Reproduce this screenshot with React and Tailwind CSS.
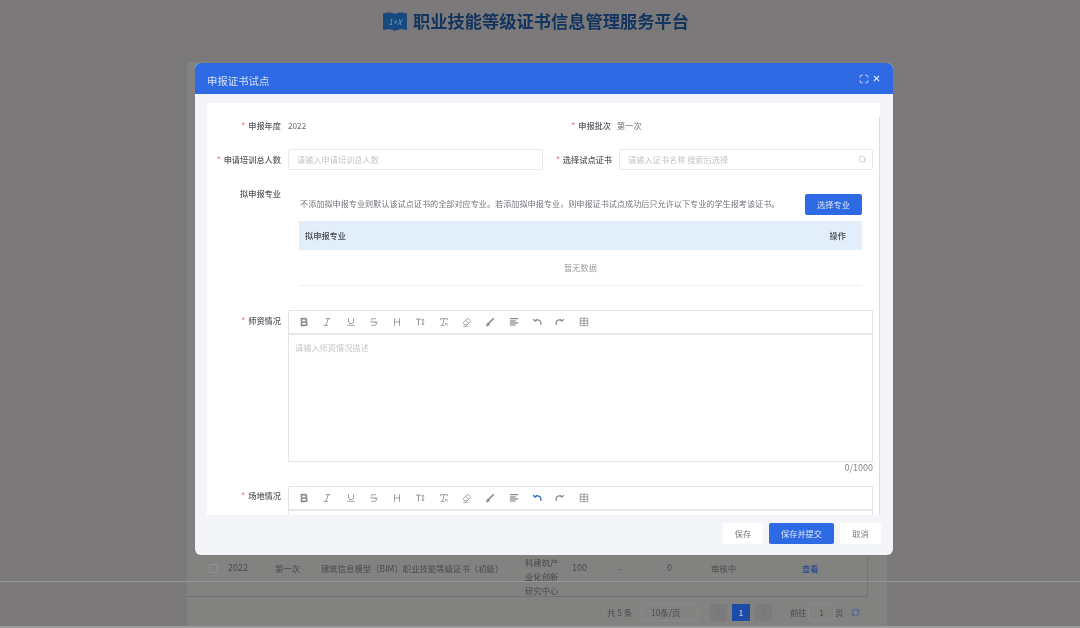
import React from 'react';
import {
  Underline, Strikethrough, Heading, RemoveFormatting, Italic, Table, Maximize, X, Search,
  ChevronLeft, ChevronRight, ChevronDown, RefreshCw,
} from 'lucide-react';

const BoldMark = (props) => (
  <svg viewBox="0 0 24 24" fill="none" stroke="currentColor" strokeWidth="4" {...props}>
    <path d="M6 4h8a4 4 0 0 1 0 8H6zM6 12h9a4 4 0 0 1 0 8H6z" />
  </svg>
);

const UndoArc = (props) => (
  <svg viewBox="0 0 24 24" fill="none" stroke="currentColor" strokeWidth="3" {...props}>
    <path d="M3 5l4 5 5-4" />
    <path d="M7 9c3-3 12-3 14 3 .5 2 .3 4 0 7" />
  </svg>
);

const RedoArc = (props) => (
  <svg viewBox="0 0 24 24" fill="none" stroke="currentColor" strokeWidth="3" {...props}>
    <path d="M21 5l-4 5-5-4" />
    <path d="M17 9C14 6 5 6 3 12c-.5 2-.3 4 0 7" />
  </svg>
);

const FontSize = (props) => (
  <svg viewBox="0 0 24 24" fill="none" stroke="currentColor" strokeWidth="2.2" {...props}>
    <path d="M2 5h13M8.5 5v15M19 5v14M16.5 8 19 5l2.5 3M16.5 16l2.5 3 2.5-3" />
  </svg>
);

const Pen = (props) => (
  <svg viewBox="0 0 24 24" fill="none" stroke="currentColor" strokeWidth="2" {...props}>
    <path d="M14 3l7 7-9 9H7l-3-3v-4zM9 8l7 7" />
    <path d="M3 22h12" />
  </svg>
);

const Brush = (props) => (
  <svg viewBox="0 0 24 24" fill="none" stroke="currentColor" strokeWidth="4" {...props}>
    <path d="M21 3 9 15" />
    <path d="M9 14c-3 0-5 2-5 4 0 1-1 2-2 3 4 1 9 0 9-5z" fill="currentColor" strokeWidth="1" />
  </svg>
);

const AlignBars = (props) => (
  <svg viewBox="0 0 24 24" fill="none" stroke="currentColor" strokeWidth="3" {...props}>
    <path d="M2 4h20M2 9h14M2 14h20M2 19h14" />
  </svg>
);

const tools = [BoldMark, Italic, Underline, Strikethrough, Heading, FontSize, RemoveFormatting, Pen, Brush, AlignBars, UndoArc, RedoArc, Table];

const Toolbar = ({ activeUndo }) => (
  <div className="flex h-[24px] items-center gap-[13.3px] border-b-2 border-[#e6e7ea] pl-[10px]">
    {tools.map((Icon, i) => (
      <Icon
        key={i}
        className={`h-[10px] w-[10px] ${activeUndo && Icon === UndoArc ? 'text-[#2f68c4]' : 'text-[#8a8c90]'}`}
      />
    ))}
  </div>
);

const Label = ({ children, required = true, className = '' }) => (
  <div className={`shrink-0 text-right text-[8.2px] font-medium text-[#55585f] ${className}`}>
    {required && <span className="mr-[3px] text-[#ee7b7b]">*</span>}
    {children}
  </div>
);

const Input = ({ placeholder, icon }) => (
  <div className="flex h-[21px] flex-1 items-center justify-between rounded-[2px] border border-[#e8e9ed] pr-[5px] pl-[8px] text-[8.2px] text-[#c2c4c9]">
    {placeholder}
    {icon}
  </div>
);

const App = () => {
  return (
    <div className="relative flex h-[628px] w-[1080px] flex-col overflow-hidden bg-[#7b7979] font-['Noto_Sans_CJK_SC','Noto_Sans',sans-serif] blur-[0.35px]">
      {/* page behind the dialog */}
      <header className="flex h-[42px] shrink-0 items-center gap-[6px] pl-[383px]">
        <svg viewBox="0 0 24 19" className="h-[19px] w-[24px]">
          <path d="M0 1.5c4-1.5 9-1.5 12 .5 3-2 8-2 12-.5V18c-4-1.2-9-1-12 1-3-2-8-2.2-12-1z" fill="#17497f" />
          <text x="12" y="12.5" fontSize="8" fontStyle="italic" fill="#6f9fd0" textAnchor="middle">1+X</text>
        </svg>
        <h1 className="text-[17.25px] font-bold leading-none text-[#12345f]">职业技能等级证书信息管理服务平台</h1>
      </header>

      <main className="mt-[20px] ml-[187px] flex w-[700px] flex-1 flex-col justify-end bg-[#828281] pb-[2px] text-[8.4px] text-[#4a4a4a]">
        <div className="flex h-[42px] w-[681px] items-center border-r border-b border-[#737373] pb-[15px] pl-[22px]">
          <span className="h-[9px] w-[9px] rounded-[1px] border border-[#8f8f8f]" />
          <span className="ml-[10px] w-[47px] text-[9px]">2022</span>
          <span className="w-[46px]">第一次</span>
          <span className="w-[204px]">建筑信息模型（BIM）职业技能等级证书（初级）</span>
          <span className="w-[47px] self-start pr-[12px] leading-[14px]">科建筑产业化创新研究中心</span>
          <span className="w-[47px] text-[9px]">100</span>
          <span className="w-[48px]">-</span>
          <span className="w-[44px] text-[9px]">0</span>
          <span className="w-[91px]">审核中</span>
          <span className="font-medium text-[#27478f]">查看</span>
        </div>
        <div className="flex h-[29px] items-center pt-[2px] pl-[420px]">
          <span className="w-[34px]">共 5 条</span>
          <span className="flex h-[17px] w-[57px] items-center justify-between rounded-[2px] border border-[#8a8a8a] px-[9px]">
            10条/页
            <ChevronDown className="h-[7px] w-[7px] text-[#737373]" />
          </span>
          <span className="ml-[12px] flex h-[17px] w-[17px] items-center justify-center bg-[#7c7c7c]">
            <ChevronLeft className="h-[9px] w-[9px] text-[#6b6b6b]" />
          </span>
          <span className="ml-[5px] flex h-[17px] w-[18px] items-center justify-center bg-[#1c4ca6] font-medium text-[#b9c6de]">1</span>
          <span className="ml-[5px] flex h-[17px] w-[17px] items-center justify-center bg-[#7c7c7c]">
            <ChevronRight className="h-[9px] w-[9px] text-[#6b6b6b]" />
          </span>
          <span className="ml-[18px] w-[18px]">前往</span>
          <span className="flex h-[17px] w-[27px] items-center justify-center rounded-[2px] border border-[#8a8a8a]">1</span>
          <span>页</span>
          <RefreshCw className="ml-[8px] h-[9px] w-[9px] text-[#3f5c9c]" />
        </div>
      </main>

      {/* stray rule across the page */}
      <div className="absolute top-[581px] left-0 h-px w-full bg-[#949494]" />
      <div className="absolute bottom-0 left-0 h-[2px] w-full bg-[#9a9a9a]" />

      {/* dialog */}
      <div className="absolute top-[63px] left-[195px] flex h-[492px] w-[698px] flex-col overflow-hidden rounded-[6px] bg-[#f4f5f9]">
        <div className="flex h-[31px] shrink-0 items-center justify-between bg-[#2d6ae3] px-[12px] text-[10.4px] text-[#d5e1f8]">
          <span className="pt-[4px]">申报证书试点</span>
          <div className="flex items-center gap-[3px] text-[#dbe6fa]">
            <Maximize className="h-[10px] w-[10px]" />
            <X className="h-[9px] w-[9px]" strokeWidth={3} />
          </div>
        </div>

        <div className="relative mt-[9px] mr-[13px] ml-[12px] h-[412px] shrink-0 overflow-hidden bg-white pt-[12px] text-[8.2px]">
          <div className="absolute top-[14px] right-0 bottom-0 w-px bg-[#dcdde0]" />

          <div className="flex h-[21px] items-center">
            <Label className="w-[74px]">申报年度</Label>
            <span className="ml-[7px] w-[255px] text-[#6b6d72]">2022</span>
            <Label className="w-[68px]">申报批次</Label>
            <span className="ml-[6px] text-[#6b6d72]">第一次</span>
          </div>

          <div className="mt-[13px] flex h-[21px] w-[666px] items-center">
            <Label className="w-[74px]">申请培训总人数</Label>
            <div className="ml-[7px] flex w-[255px]"><Input placeholder="请输入申请培训总人数" /></div>
            <Label className="w-[69px]">选择试点证书</Label>
            <div className="ml-[7px] flex w-[254px]">
              <Input placeholder="请输入证书名称 搜索后选择" icon={<Search className="h-[9px] w-[9px] text-[#c8cacf]" />} />
            </div>
          </div>

          <div className="mt-[13px] flex">
            <Label required={false} className="w-[74px] pt-[4px]">拟申报专业</Label>
            <div className="ml-[18px] w-[563px] pt-[11px]">
              <div className="flex h-[21px] items-center justify-between pl-px text-[8.14px] text-[#72747a]">
                <span>不添加拟申报专业则默认该试点证书的全部对应专业。若添加拟申报专业，则申报证书试点成功后只允许以下专业的学生报考该证书。</span>
                <button className="h-[21px] w-[57px] rounded-[2px] bg-[#2d6ae3] text-[8.2px] text-[#dbe6fa]">选择专业</button>
              </div>
              <div className="mt-[6px] flex h-[29px] items-center justify-between bg-[#e3eefb] px-[6px] pr-[16px] font-medium text-[#44474d]">
                <span>拟申报专业</span>
                <span>操作</span>
              </div>
              <div className="flex h-[36px] items-center justify-center border-b border-[#eeeff2] text-[#9a9ca1]">暂无数据</div>
            </div>
          </div>

          <div className="mt-[24px] flex">
            <Label className="w-[74px] pt-[4px]">师资情况</Label>
            <div className="ml-[7px] w-[585px]">
              <div className="border border-[#e3e4e7]">
                <Toolbar />
                <div className="h-[126px] px-[6px] py-[6px] text-[#c5c7cb]">请输入师资情况描述</div>
              </div>
              <div className="mt-px h-[23px] text-right text-[9px] leading-none text-[#85878b]">0/1000</div>
            </div>
          </div>

          <div className="flex">
            <Label className="w-[74px] pt-[3px]">场地情况</Label>
            <div className="ml-[7px] w-[585px] border border-[#e3e4e7]">
              <Toolbar activeUndo />
              <div className="h-[60px]" />
            </div>
          </div>
        </div>

        <div className="flex flex-1 items-start justify-end gap-[6px] pt-[8px] pr-[12px] text-[8.2px]">
          <button className="h-[21px] w-[40px] rounded-[2px] bg-white text-[#77797d]">保存</button>
          <button className="h-[21px] w-[65px] rounded-[2px] bg-[#2d6ae3] text-[#dbe6fa]">保存并提交</button>
          <button className="h-[21px] w-[41px] rounded-[2px] bg-white text-[#77797d]">取消</button>
        </div>
      </div>
    </div>
  );
};

export default App;
